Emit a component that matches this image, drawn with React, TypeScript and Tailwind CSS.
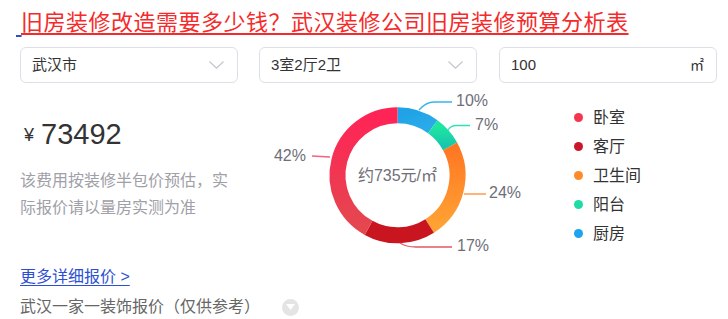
import React from 'react';

const FONT = '"Liberation Sans", "Noto Sans CJK SC", sans-serif';

// clockwise angles from 12 o'clock, centre of the ring
const CX = 137.5;
const CY = 85.3;
const R = 60;

const pt = (deg: number) => {
  const a = ((deg - 90) * Math.PI) / 180;
  return [CX + R * Math.cos(a), CY + R * Math.sin(a)];
};

const arc = (from: number, to: number) => {
  const [x1, y1] = pt(from);
  const [x2, y2] = pt(to);
  const large = to - from > 180 ? 1 : 0;
  return `M ${x1} ${y1} A ${R} ${R} 0 ${large} 1 ${x2} ${y2}`;
};

const segments = [
  { from: 0, to: 36, stroke: 'url(#gBlue)' },
  { from: 36, to: 61.2, stroke: 'url(#gTeal)' },
  { from: 61.2, to: 147.6, stroke: 'url(#gOrange)' },
  { from: 147.6, to: 208.8, stroke: '#c9151f' },
  { from: 208.8, to: 360, stroke: 'url(#gPink)' },
];

const labels = [
  { text: '10%', x: 196, y: 16, anchor: 'start', line: 'M159 20 Q166 12 174 12 L192 12', color: '#3ab4ee' },
  { text: '7%', x: 215, y: 40, anchor: 'start', line: 'M188 40 Q191 35.5 196 35.5 L210 35.5', color: '#2ee3b3' },
  { text: '24%', x: 229, y: 108, anchor: 'start', line: 'M204 104 L226 104', color: '#ff8a30' },
  { text: '17%', x: 197, y: 161, anchor: 'start', line: 'M140 153 Q146 157 156 157 L192 157', color: '#e25866' },
  { text: '42%', x: 46, y: 71, anchor: 'end', line: 'M70 67 L52 66', color: '#f7617f' },
];

const legend = [
  { name: '卧室', color: '#f5344f' },
  { name: '客厅', color: '#c8172a' },
  { name: '卫生间', color: '#ff8a2a' },
  { name: '阳台', color: '#1fdba6' },
  { name: '厨房', color: '#1ca4ee' },
];

const Chevron = () => (
  <svg width="15" height="8" viewBox="0 0 15 8">
    <polyline points="0.5,0.5 7.5,7.2 14.5,0.5" fill="none" stroke="#c0c4cc" strokeWidth="1.1" />
  </svg>
);

const Donut = () => (
  <svg width="270" height="165" viewBox="0 0 270 165" className="shrink-0">
    <defs>
      <linearGradient id="gPink" x1="0" y1="0" x2="0" y2="1">
        <stop offset="0" stopColor="#ff2456" />
        <stop offset="1" stopColor="#e4474f" />
      </linearGradient>
      <linearGradient id="gOrange" x1="0" y1="0" x2="0" y2="1">
        <stop offset="0" stopColor="#ff7622" />
        <stop offset="1" stopColor="#ffa234" />
      </linearGradient>
      <linearGradient id="gBlue" x1="0" y1="0" x2="1" y2="1">
        <stop offset="0" stopColor="#1fa3e6" />
        <stop offset="1" stopColor="#2cabea" />
      </linearGradient>
      <linearGradient id="gTeal" x1="0" y1="0" x2="0" y2="1">
        <stop offset="0" stopColor="#1ee6a0" />
        <stop offset="1" stopColor="#17c6ad" />
      </linearGradient>
    </defs>
    {segments.map((s, i) => (
      <path key={i} d={arc(s.from, s.to)} fill="none" stroke={s.stroke} strokeWidth="16" />
    ))}
    {labels.map((l) => (
      <g key={l.text}>
        <path d={l.line} fill="none" stroke={l.color} strokeWidth="1.3" />
        <text x={l.x} y={l.y} textAnchor={l.anchor as 'start' | 'end'} fontSize="16" fill="#6e6e78" fontFamily={FONT}>
          {l.text}
        </text>
      </g>
    ))}
    <text x={CX} y={CY + 5.5} textAnchor="middle" fontSize="16" fill="#707078" fontFamily={FONT}>
      约735元/㎡
    </text>
  </svg>
);

export default function App() {
  return (
    <div className="w-[728px] h-[319px] overflow-hidden bg-white" style={{ fontFamily: FONT }}>
      {/* 标题 */}
      <div className="flex items-end pt-[5px] pl-[16px] h-[38px]">
        <span className="w-[5px] h-[26px] underline decoration-[#2b4fd3] text-[20px]">&nbsp;</span>
        <a className="text-[22px] leading-[30px] tracking-[0.5px] text-[#f52a2a] underline decoration-[2px] underline-offset-[3px]">
          旧房装修改造需要多少钱？武汉装修公司旧房装修预算分析表
        </a>
      </div>

      {/* 选择 */}
      <div className="grid grid-cols-[218px_218px_219px] gap-x-[21px] pl-[20px] mt-[9px]">
        <div className="h-[36px] rounded-[6px] border border-[#dcdfe6] flex items-center justify-between pl-[11px] pr-[13px] text-[15px] text-[#333]">
          <span>武汉市</span>
          <Chevron />
        </div>
        <div className="h-[36px] rounded-[6px] border border-[#dcdfe6] flex items-center justify-between pl-[11px] pr-[13px] text-[15px] text-[#333]">
          <span>3室2厅2卫</span>
          <Chevron />
        </div>
        <div className="ml-[1px] h-[36px] rounded-[6px] border border-[#dcdfe6] flex items-center justify-between pl-[11px] pr-[12px] text-[15px] text-[#333]">
          <span>100</span>
          <span className="text-[14px]">㎡</span>
        </div>
      </div>

      {/* 内容 */}
      <div className="flex mt-[7px] h-[165px]">
        <div className="w-[260px] pl-[20px] shrink-0">
          <div className="mt-[27px] h-[36px] flex items-center text-[#333]">
            <span className="text-[18px] pl-[4px] mr-[7px]">¥</span>
            <span className="text-[29px]">73492</span>
          </div>
          <p className="mt-[14px] text-[16px] leading-[27px] text-[#a0a0a8] w-[222px]">
            该费用按装修半包价预估，实际报价请以量房实测为准
          </p>
        </div>
        <Donut />
        <div className="ml-[44px] mt-[13px] flex flex-col">
          {legend.map((l) => (
            <div key={l.name} className="h-[29px] flex items-center text-[16px] text-[#333]">
              <span className="w-[9px] h-[9px] rounded-full mr-[10px]" style={{ backgroundColor: l.color }} />
              {l.name}
            </div>
          ))}
        </div>
      </div>

      {/* 底部 */}
      <div className="pl-[20px] mt-[10px]">
        <a className="block h-[24px] leading-[24px] text-[16px] text-[#2b4fd3] underline underline-offset-[3px]">
          更多详细报价 &gt;
        </a>
        <div className="mt-[6px] h-[24px] flex items-center text-[16px] text-[#666]">
          <span>武汉一家一装饰报价（仅供参考）</span>
          <span className="ml-[22px] w-[17px] h-[17px] rounded-full bg-[#e4e4e4] flex items-center justify-center">
            <svg width="9" height="6" viewBox="0 0 9 6">
              <polygon points="0,0 9,0 4.5,6" fill="#fff" />
            </svg>
          </span>
        </div>
      </div>
    </div>
  );
}
